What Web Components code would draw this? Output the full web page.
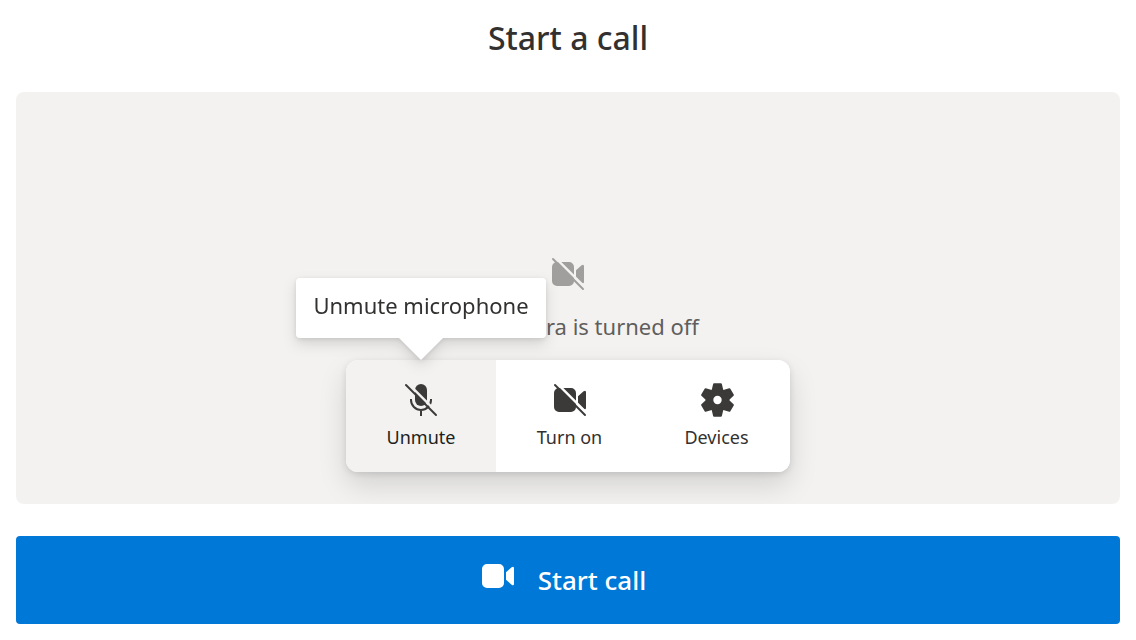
<!DOCTYPE html>
<html lang="en">
<head>
<meta charset="utf-8">
<title>Start a call</title>
<style>
  body { margin: 0; background: #fff; color: #323130; font-family: "Segoe UI", "Noto Sans", sans-serif; }
</style>
</head>
<body>
<call-setup>
  <span slot="title">Start a call</span>
  <camera-preview>
    <call-icon slot="icon" name="video-off"></call-icon>
    Your camera is turned off
    <call-toolbar slot="controls">
      <call-control icon="mic-off" active tip="Unmute microphone">Unmute</call-control>
      <call-control icon="video-off">Turn on</call-control>
      <call-control icon="gear">Devices</call-control>
    </call-toolbar>
  </camera-preview>
  <start-button>Start call</start-button>
</call-setup>

<script>
const camera = `
    <path d="M5 4h12a5 5 0 0 1 5 5v14a5 5 0 0 1-5 5H5a5 5 0 0 1-5-5V9a5 5 0 0 1 5-5zM24 12.2l5.6-5q2.4-1.4 2.4 1v15.6q0 2.4-2.4 1L24 19.8z" fill="currentColor"/>`;
const slash = `
    <path d="M1.8 -1.8 33.8 30.2" stroke="var(--gap, #fff)" stroke-width="2.4"/>
    <path d="M1 1 31 31" stroke="currentColor" stroke-width="2" stroke-linecap="round"/>`;
const tooth = '<path d="M-3.4-15.8h6.8l1.4 6h-9.6z" fill="currentColor" stroke-width="2" stroke-linejoin="round"';
const icons = {
  'mic-off': `
    <rect x="10" y="0" width="12" height="22" rx="6" fill="currentColor"/>
    <path d="M6 15v1a10 10 0 0 0 20 0v-1M16 26v6" fill="none" stroke="currentColor" stroke-width="2"/>${slash}`,
  'video-off': camera + slash,
  'video': camera,
  'gear': `
    <g transform="translate(16.5 16)" stroke="currentColor">
      <circle r="8" fill="none" stroke-width="7.6"/>
      ${[0, 60, 120, 180, 240, 300].map(a => `${tooth} transform="rotate(${a})"/>`).join('')}
    </g>`
};

class CallIcon extends HTMLElement {
  connectedCallback() {
    this.attachShadow({ mode: 'open' }).innerHTML = `
      <style>
        :host { display: block; width: 32px; height: 32px; }
        svg { display: block; overflow: visible; }
      </style>
      <svg width="32" height="32" viewBox="0 0 32 32" aria-hidden="true">${icons[this.getAttribute('name')]}</svg>`;
  }
}

class CallControl extends HTMLElement {
  connectedCallback() {
    const tip = this.getAttribute('tip');
    this.attachShadow({ mode: 'open' }).innerHTML = `
      <style>
        :host { display: block; position: relative; flex: 1; }
        button {
          width: 100%; border: 0; margin: 0; padding: 24px 8px 22px; background: #fff; color: #323130;
          font: 18px/26px "Segoe UI", "Noto Sans", sans-serif; cursor: pointer;
          display: flex; flex-direction: column; align-items: center; gap: 8px;
          border-radius: inherit;
        }
        call-icon { color: #3b3a39; }
        :host([active]) { --gap: #f3f2f1; }
        :host([active]) button { background: #f3f2f1; color: #201f1e; }
        .tip {
          position: absolute; bottom: calc(100% + 22px); left: 50%; transform: translateX(-50%);
          min-width: 218px; text-align: center;
          padding: 12px 16px 18px; background: #fff; border-radius: 4px; white-space: nowrap;
          font-size: 22px; line-height: 30px;
          filter: drop-shadow(0 6px 7px #0000001f) drop-shadow(0 1px 2px #0000001a);
        }
        .tip::after {
          content: ""; position: absolute; top: 100%; left: 50%; margin-left: -22px;
          border: 22px solid transparent; border-top-color: #fff; border-bottom: 0;
        }
      </style>
      <button${tip ? ' aria-describedby="tip"' : ''}><call-icon name="${this.getAttribute('icon')}"></call-icon><slot></slot></button>
      ${tip ? `<div class="tip" id="tip" role="tooltip">${tip}</div>` : ''}`;
  }
}

class CallToolbar extends HTMLElement {
  connectedCallback() {
    this.attachShadow({ mode: 'open' }).innerHTML = `
      <style>
        :host {
          display: flex; width: 444px; max-width: 100%; border-radius: 12px; background: #fff;
          box-shadow: 0 13px 29px #00000022, 0 2px 7px #0000001c;
        }
        ::slotted(:first-child) { flex: 0 0 150px; border-radius: 12px 0 0 12px; }
        ::slotted(:last-child) { border-radius: 0 12px 12px 0; }
      </style>
      <slot></slot>`;
    this.setAttribute('role', 'toolbar');
  }
}

class CameraPreview extends HTMLElement {
  connectedCallback() {
    this.attachShadow({ mode: 'open' }).innerHTML = `
      <style>
        :host {
          display: grid; flex: 1; min-height: 300px; background: #f3f2f1; border-radius: 8px;
          justify-items: center; overflow: hidden;
        }
        .message {
          grid-area: 1 / 1; align-self: center; display: flex; flex-direction: column; align-items: center;
          gap: 20px; padding-top: 4px; color: #605e5c; font-size: 22px; line-height: 32px; --gap: #f3f2f1;
        }
        slot[name=icon] { display: block; color: #a19f9d; }
        .controls { grid-area: 1 / 1; align-self: end; padding-bottom: 32px; position: relative; }
      </style>
      <div class="message"><slot name="icon"></slot><div><slot></slot></div></div>
      <div class="controls"><slot name="controls"></slot></div>`;
  }
}

class StartButton extends HTMLElement {
  connectedCallback() {
    this.attachShadow({ mode: 'open' }).innerHTML = `
      <style>
        :host { display: block; }
        button {
          width: 100%; min-height: 88px; border: 0; border-radius: 4px; margin: 0; padding: 24px 24px 24px 16px;
          background: #0078d7; color: #fff; cursor: pointer;
          font: 500 26px/40px "Segoe UI", "Noto Sans", sans-serif;
          display: flex; justify-content: center; align-items: flex-start; gap: 24px;
        }
      </style>
      <button><call-icon name="video"></call-icon><span><slot></slot></span></button>`;
  }
}

class CallSetup extends HTMLElement {
  connectedCallback() {
    this.attachShadow({ mode: 'open' }).innerHTML = `
      <style>
        :host {
          display: flex; flex-direction: column; gap: 32px; box-sizing: border-box;
          min-height: 100vh; padding: 16px;
        }
        h1 { margin: 0; text-align: center; font-size: 32px; line-height: 44px; font-weight: 500; }
      </style>
      <h1><slot name="title"></slot></h1>
      <slot></slot>`;
  }
}

customElements.define('call-icon', CallIcon);
customElements.define('call-control', CallControl);
customElements.define('call-toolbar', CallToolbar);
customElements.define('camera-preview', CameraPreview);
customElements.define('start-button', StartButton);
customElements.define('call-setup', CallSetup);
</script>
</body>
</html>
